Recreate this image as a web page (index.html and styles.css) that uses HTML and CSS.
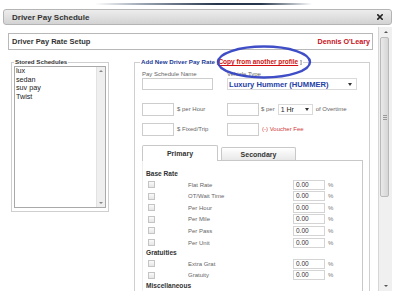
FILE: index.html
```html
<!DOCTYPE html>
<html>
<head>
<meta charset="utf-8">
<link rel="stylesheet" href="styles.css">
</head>
<body>
<div class="shade"></div>
<div class="dialog">
  <div class="titlebar">
    <span class="title">Driver Pay Schedule</span>
    <svg class="close" width="6" height="6" viewBox="0 0 6 6"><path d="M0.8 0.8 L5.2 5.2 M5.2 0.8 L0.8 5.2" stroke="#222" stroke-width="1.6" stroke-linecap="square"/></svg>
  </div>
  <div class="viewport">
    <div class="content">
      <div class="setup-head">
        <span class="setup-title">Driver Pay Rate Setup</span>
        <span class="user">Dennis O'Leary</span>
      </div>
      <div class="columns">
        <fieldset class="stored">
          <legend>Stored Schedules</legend>
          <div class="listbox">
            <ul class="items">
              <li>lux</li>
              <li>sedan</li>
              <li>suv pay</li>
              <li>Twist</li>
            </ul>
            <div class="lb-scroll">
              <div class="lb-btn"><span class="tri-up"></span></div>
              <div class="lb-track"></div>
              <div class="lb-btn"><span class="tri-down"></span></div>
            </div>
          </div>
        </fieldset>
        <fieldset class="rate">
          <legend><span class="legend-title">Add New Driver Pay Rate</span> <span class="bracket">[</span><a class="copy">Copy from another profile</a><span class="bracket"> ]</span></legend>
          <div class="grid-row labels">
            <span class="lbl">Pay Schedule Name</span>
            <span class="lbl">Vehicle Type</span>
          </div>
          <div class="grid-row first">
            <span class="input wide"></span>
            <div class="select vehicle"><span>Luxury Hummer (HUMMER)</span><span class="tri-down dark"></span></div>
          </div>
          <div class="grid-row second">
            <div class="cell"><span class="input small"></span><span class="lbl after">$ per Hour</span></div>
            <div class="cell"><span class="input small"></span><span class="lbl after2">$ per</span><div class="select hr"><span>1 Hr</span><span class="tri-down dark"></span></div><span class="lbl after">of Overtime</span></div>
          </div>
          <div class="grid-row third">
            <div class="cell"><span class="input small"></span><span class="lbl after">$ Fixed/Trip</span></div>
            <div class="cell"><span class="input small"></span><span class="lbl after red">(-) Voucher Fee</span></div>
          </div>
          <div class="tabs">
            <div class="tab active">Primary</div>
            <div class="tab">Secondary</div>
          </div>
          <div class="panel">
            <div class="sec-title">Base Rate</div>
            <div class="row"><span class="cb"></span><span class="rl">Flat Rate</span><span class="pct">0.00</span><span class="pc">%</span></div>
            <div class="row"><span class="cb"></span><span class="rl">OT/Wait Time</span><span class="pct">0.00</span><span class="pc">%</span></div>
            <div class="row"><span class="cb"></span><span class="rl">Per Hour</span><span class="pct">0.00</span><span class="pc">%</span></div>
            <div class="row"><span class="cb"></span><span class="rl">Per Mile</span><span class="pct">0.00</span><span class="pc">%</span></div>
            <div class="row"><span class="cb"></span><span class="rl">Per Pass</span><span class="pct">0.00</span><span class="pc">%</span></div>
            <div class="row"><span class="cb"></span><span class="rl">Per Unit</span><span class="pct">0.00</span><span class="pc">%</span></div>
            <div class="sec-title">Gratuities</div>
            <div class="row"><span class="cb"></span><span class="rl">Extra Grat</span><span class="pct">0.00</span><span class="pc">%</span></div>
            <div class="row"><span class="cb"></span><span class="rl">Gratuity</span><span class="pct">0.00</span><span class="pc">%</span></div>
            <div class="sec-title">Miscellaneous</div>
            <div class="row"><span class="cb"></span><span class="rl"></span><span class="pct"></span><span class="pc"></span></div>
          </div>
        </fieldset>
      </div>
    </div>
    <div class="vscroll">
      <div class="vs-btn"><span class="tri-up"></span></div>
      <div class="vs-track"><div class="thumb"><span class="grip"></span></div></div>
      <div class="vs-btn"><span class="tri-down"></span></div>
    </div>
  </div>
</div>
<svg class="annot" width="395" height="301" viewBox="0 0 395 301">
  <ellipse cx="264" cy="62" rx="46" ry="15.5" fill="none" stroke="#2f3fc2" stroke-width="2.4" opacity="0.92"/>
</svg>
</body>
</html>
```

FILE: styles.css
```css
* { box-sizing: border-box; }
html, body { margin: 0; padding: 0; background: #fff; }
body {
  width: 395px;
  height: 301px;
  overflow: hidden;
  position: relative;
  font-family: "Liberation Sans", Arial, sans-serif;
  color: #333;
}
.shade {
  height: 2px;
  margin-top: 3px;
  background: linear-gradient(to right, rgba(40,55,80,0) 24%, rgba(90,105,130,0.6) 36%, #26364c 55%, #26364c 66%, rgba(40,55,80,0) 79%);
}
.dialog { margin: 4px 3px 0 3px; }
.titlebar {
  height: 16px;
  border: 1px solid #b4b4b4;
  border-radius: 3px;
  background: linear-gradient(#ededed, #d3d3d3);
  display: flex;
  align-items: center;
  justify-content: space-between;
  padding: 0 8px;
}
.title { font-weight: bold; font-size: 8px; color: #333; }
.close { display: block; }
.viewport { margin-top: 2px; height: 264px; display: flex; overflow: hidden; }
.content { flex: 1; min-height: 0; overflow: hidden; padding: 6px 5px 0 5px; }
.setup-head {
  height: 17px;
  border: 1px solid #b8b8b8;
  display: flex;
  align-items: center;
  justify-content: space-between;
  padding: 0 2px 0 3px;
}
.setup-title { font-weight: bold; font-size: 7.5px; color: #333; }
.user { font-weight: bold; font-size: 7.2px; color: #c8101a; }
.columns { display: flex; align-items: flex-start; margin-top: 8px; }
fieldset { margin: 0; min-width: 0; border: 1px solid #cfcfcf; }
legend { font-weight: bold; font-size: 6.2px; line-height: 8px; padding: 0 1px; }
.stored { margin-left: 3px; width: 98px; padding: 0 2px 3px 2px; }
.stored legend { color: #333; }
.listbox { height: 142px; border: 1px solid #a9a9a9; display: flex; }
.items { flex: 1; list-style: none; margin: 0; padding: 0 0 0 1px; font-size: 7.2px; line-height: 8.7px; color: #222; }
.lb-scroll { width: 9px; background: #efefef; border-left: 1px solid #e2e2e2; display: flex; flex-direction: column; }
.lb-btn { height: 8px; display: flex; align-items: center; justify-content: center; }
.lb-track { flex: 1; }
.tri-up { width: 0; height: 0; border-left: 2px solid transparent; border-right: 2px solid transparent; border-bottom: 2px solid #888; }
.tri-down { width: 0; height: 0; border-left: 2px solid transparent; border-right: 2px solid transparent; border-top: 2px solid #888; }
.tri-down.dark { border-left-width: 2.5px; border-right-width: 2.5px; border-top: 3px solid #333; }
.rate { margin-left: 25px; width: 236px; padding: 0 6px 0 7px; }
.rate legend { margin-left: -2px; }
.legend-title { color: #1c3b98; }
.bracket { color: #333; font-weight: normal; }
.copy { color: #d01010; text-decoration: underline; font-size: 6.5px; }
.grid-row { display: grid; grid-template-columns: 85px auto; align-items: center; }
.labels { margin-top: 5px; }
.lbl { font-size: 6px; line-height: 7px; color: #666; white-space: nowrap; }
.input { display: block; border: 1px solid #cdcdcd; background: #fff; }
.input.wide { width: 71px; height: 12px; }
.input.small { width: 32px; height: 13px; }
.select { display: flex; align-items: center; justify-content: space-between; border: 1px solid #dadada; background: #fff; }
.vehicle { width: 130px; height: 12px; padding: 0 4px 0 1px; font-weight: bold; font-size: 7.6px; color: #1f42a6; }
.first { margin-top: 0; }
.second { margin-top: 13px; }
.third { margin-top: 7px; }
.cell { display: flex; align-items: center; }
.after { margin-left: 3px; }
.after2 { margin-left: 2px; }
.hr { width: 35px; height: 11px; margin-left: 3px; padding: 0 3px 0 2px; font-size: 7px; color: #222; }
.red { color: #d03a3a; }
.tabs { display: flex; align-items: flex-end; gap: 3px; margin-top: 9px; }
.tab {
  width: 75px;
  height: 13px;
  border: 1px solid #c8c8c8;
  border-bottom: none;
  border-radius: 2px 2px 0 0;
  background: linear-gradient(#ffffff, #e8e8e8);
  display: flex;
  align-items: center;
  justify-content: center;
  font-weight: bold;
  font-size: 7px;
  color: #333;
}
.tab.active {
  width: 76px;
  height: 16px;
  margin-bottom: -1px;
  background: #fff;
  position: relative;
  z-index: 1;
}
.panel {
  width: 221px;
  border-top: 1px solid #c8c8c8;
  border-right: 1px solid #c8c8c8;
  border-left: 1px solid #eeeeee;
  padding: 8.25px 0 0 3px;
}
.sec-title { font-weight: bold; font-size: 6.6px; line-height: 9.5px; height: 9.5px; color: #333; }
.row {
  display: grid;
  grid-template-columns: 40px 105px 35px auto;
  align-items: center;
  height: 11.6px;
  margin-left: 2px;
}
.cb { display: block; width: 7px; height: 7px; border: 1px solid #c4c4c4; background: linear-gradient(#fafafa, #e6e6e6); }
.rl { font-size: 6px; color: #666; white-space: nowrap; }
.pct { display: block; width: 32px; height: 10px; border: 1px solid #d4d4d4; font-size: 6.5px; line-height: 8px; padding-left: 2px; color: #333; }
.pc { font-size: 6px; color: #777; }
.vscroll { width: 14px; border-left: 1px solid #d6d6d6; background: #f0f0f0; display: flex; flex-direction: column; }
.vs-btn { height: 10px; display: flex; align-items: center; justify-content: center; }
.vs-btn .tri-up { border-bottom-color: #555; }
.vs-btn .tri-down { border-top-color: #555; }
.vs-track { flex: 1; }
.thumb {
  width: 9px;
  height: 160px;
  margin-left: 1px;
  border: 1px solid #b9b9b9;
  border-radius: 2px;
  background: linear-gradient(to right, #e9e9e9, #d6d6d6);
  display: flex;
  align-items: center;
  justify-content: center;
}
.grip { width: 4px; height: 5px; border-top: 1px solid #999; border-bottom: 1px solid #999; background: linear-gradient(transparent 40%, #999 40%, #999 60%, transparent 60%); }
.annot { position: absolute; left: 0; top: 0; pointer-events: none; }
```
